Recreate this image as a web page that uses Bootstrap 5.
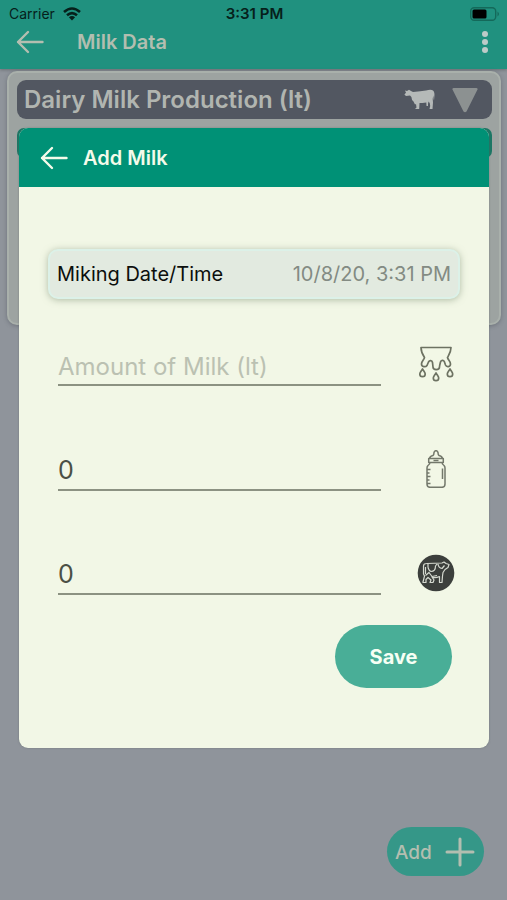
<!DOCTYPE html>
<html lang="en">
<head>
<meta charset="utf-8">
<meta name="viewport" content="width=device-width, initial-scale=1">
<title>Add Milk</title>
<link rel="stylesheet" href="https://cdn.jsdelivr.net/npm/bootstrap@5.3.0/dist/css/bootstrap.min.css">
<style>
  body { font-family: Inter, "Liberation Sans", sans-serif; background: #8f949b; color: #000; }
  svg { display: block; flex: none; }
  .app-page { min-height: 100vh; }
  .app-head { background: #20917f; height: 69px; box-shadow: 0 1px 3px rgba(0,0,0,.25); }
  .status-row { display: grid; grid-template-columns: 1fr auto 1fr; height: 28px; padding: 0 7px 0 9px; font-size: 14px; line-height: 28px; color: #06201b; }
  .status-time { font-size: 15px; line-height: 28px; font-weight: 600; }
  .title-row { height: 28px; padding: 0 18px 0 16px; color: #b3beb0; }
  .page-title { font-size: 20px; line-height: 28px; font-weight: 600; margin-left: 33px; }
  .plain-btn { border: 0; background: none; padding: 0; color: inherit; }
  .record-panel { margin: 2px 6px 0 7px; min-height: 254px; padding: 7px 7px 7px 8px; background: #9da3a1; border: 2px solid #a9b0ab; border-radius: 10px; box-shadow: 0 1px 4px rgba(60,65,75,.4); }
  .record-head { height: 39px; padding: 0 13px 0 7px; border-radius: 9px; background: #525761; color: #b1b5b0; }
  .record-title { font-size: 24px; line-height: 39px; font-weight: 600; }
  .record-strip { height: 30px; margin-top: 9px; background: #1c7765; border-radius: 7px; }
  .add-btn { width: 97px; height: 49px; padding: 0 9px 0 8px; border-radius: 25px; background: #359788; color: #b3beb0; font-size: 19px; font-weight: 500; margin: 0 23px 24px 0; }
  .sheet-layer { position: absolute; inset: 0; padding: 128px 18px 0 19px; }
  .milk-sheet { background: #f2f7e6; border-radius: 9px; overflow: hidden; padding-bottom: 60px; box-shadow: 0 0 2px rgba(90,100,100,.6); }
  .sheet-head { background: #009176; color: #f4fbea; height: 59px; padding: 0 21px; gap: 15px; }
  .sheet-title { font-size: 20px; line-height: 28px; font-weight: 600; }
  .date-row { margin: 62px 29px 0; height: 50px; padding: 0 7px; background: #e2eae0; border: 2px solid #dcf1e8; border-radius: 10px; box-shadow: 0 1px 7px rgba(110,130,100,.5); font-size: 20px; color: #0c0f0c; }
  .date-value { color: #838b83; }
  .field-row { height: 44px; margin: 0 34px 0 39px; }
  .field-row + .field-row { margin-top: 60px; }
  .date-row + .first-field { margin-top: 43px; }
  .first-field + .field-row { margin-top: 61px; }
  .field-line { height: 44px; min-width: 0; border: 0; border-bottom: 2px solid #8c9282; border-radius: 0; background: none; padding: 4px 0 0; font-size: 25px; line-height: 32px; color: #4b5045; outline: 0; }
  .field-line::placeholder { color: #bbc1b2; opacity: 1; }
  .short-text { font-size: 24px; padding-top: 6px; }
  .field-icon { flex: none; width: 38px; height: 44px; margin-left: 36px; }
  .save-btn { width: 117px; height: 63px; border-radius: 32px; background: #49ae97; color: #f6fff4; font-size: 20px; font-weight: 700; margin: 30px 37px 0 0; }
</style>
<script src="https://cdn.jsdelivr.net/npm/bootstrap@5.3.0/dist/js/bootstrap.bundle.min.js"></script>
</head>
<body>
<div class="app-page d-flex flex-column position-relative">
  <header class="app-head">
    <div class="status-row">
      <span class="d-flex align-items-center gap-2">Carrier
        <svg width="18" height="14" viewBox="0 0 18 14" fill="none" stroke="#06201b" stroke-width="2.6"><path d="M1 5Q9-2 17 5M4 8.300Q9 4 14 8.300"/><path d="M9 13.500 5.900 10.300Q9 7.900 12.100 10.300z" fill="#06201b" stroke="none"/></svg>
      </span>
      <span class="status-time">3:31 PM</span>
      <span class="d-flex align-items-center justify-content-end">
        <svg width="30" height="14" viewBox="0 0 30 14"><rect x=".7" y=".7" width="25" height="12.600" rx="3.500" fill="none" stroke="#14695a" stroke-width="1.400"/><rect x="2.500" y="2.500" width="14" height="9" rx="1.500" fill="#000"/><path d="M27.500 4.500q3 2.500 0 5z" fill="#14695a"/></svg>
      </span>
    </div>
    <div class="title-row d-flex align-items-center">
      <button class="plain-btn" type="button" aria-label="Back"><svg width="28" height="24" viewBox="0 0 28 24" fill="none" stroke="currentColor" stroke-width="2.400" stroke-linecap="round" stroke-linejoin="round"><path d="M26.500 12H2M12 2 2 12 12 22"/></svg></button>
      <h1 class="page-title mb-0">Milk Data</h1>
      <button class="plain-btn ms-auto" type="button" aria-label="More options"><svg width="8" height="24" viewBox="0 0 8 24" fill="#bdcbc8"><circle cx="4" cy="4" r="3"/><circle cx="4" cy="12" r="3"/><circle cx="4" cy="20" r="3"/></svg></button>
    </div>
  </header>

  <main class="record-panel">
    <div class="record-head d-flex align-items-center">
      <h2 class="record-title mb-0 text-nowrap">Dairy Milk Production (lt)</h2>
      <svg class="ms-auto" width="31" height="21" viewBox="0 0 31 21" fill="#b5b9b8"><path d="M1 1.500 3 2 5 .7 7 2 9 3Q17 2 22 1.500Q27 .2 29 1.500Q31 3 30.300 8L30 11.500Q29.500 10 29.300 6.500L28.700 10 29 13.500 28.500 20H25.500L26.200 17 25.700 14 24.500 12.500 24 15 24 17H22.500L22.300 13.500Q18 14 15.500 14L15.200 20H11L12.500 18.500 12 15 11 15.500 9.500 12.500Q7.500 11 7.400 8L6 6.500 2 7 .4 5.500 2 3.800z"/></svg>
      <svg class="ms-3" width="28" height="26" viewBox="0 0 28 26"><path d="M2.500 1h23q1.500 0 1 1.500L15.500 24.500q-1.500 1.500-3 0L1.500 2.500q-.5-1.500 1-1.500z" fill="#8c9191"/></svg>
    </div>
    <div class="record-strip"></div>
  </main>

  <button class="add-btn plain-btn d-flex align-items-center justify-content-between mt-auto align-self-end" type="button"><span class="pt-1">Add</span>
    <svg width="30" height="30" viewBox="0 0 30 30" stroke="currentColor" stroke-width="3" stroke-linecap="round"><path d="M15 2v26M2 15h26"/></svg>
  </button>

  <div class="sheet-layer">
    <form class="milk-sheet" role="dialog" aria-labelledby="sheet-title">
      <div class="sheet-head d-flex align-items-center">
        <button class="plain-btn" type="button" aria-label="Close"><svg width="28" height="24" viewBox="0 0 28 24" fill="none" stroke="currentColor" stroke-width="2.400" stroke-linecap="round" stroke-linejoin="round"><path d="M26.500 12H2M12 2 2 12 12 22"/></svg></button>
        <h2 class="sheet-title mb-0" id="sheet-title">Add Milk</h2>
      </div>

      <div class="date-row d-flex align-items-center justify-content-between text-nowrap">
        <span>Miking Date/Time</span>
        <button class="plain-btn date-value" type="button">10/8/20, 3:31 PM</button>
      </div>

      <div class="field-row first-field d-flex align-items-center">
        <input class="field-line short-text flex-grow-1" id="amount" type="text" placeholder="Amount of Milk (lt)">
        <label class="field-icon d-flex align-items-center justify-content-center" for="amount" aria-label="Amount of milk">
          <svg width="36" height="36" viewBox="0 0 36 36" fill="none" stroke="#6d7262" stroke-width="1.700" stroke-linejoin="round"><path d="M3 1.500H33C33 6 31.500 8 29.500 11.500C30 14 32.500 15 32.500 18C32.500 21 28.500 21.500 27.500 19L26.300 15.500C25.500 13.800 23 14 22.500 16C22 18 21.500 19.500 21.500 21C21.500 24.500 15 24.500 15 21L14.500 16.500C14 14 11.500 14 10.500 16L9 19.500C7.500 21.500 3.500 21 3.500 18C3.500 15 6.500 13.500 6.500 11.500C4.500 8.500 3 6 3 1.500z"/><path d="M4.500 23C3 25.500 1.800 26.500 1.800 28a2.700 2.700 0 0 0 5.400 0C7.200 26.500 6 25.500 4.500 23zM18 27C16.500 29.500 15.300 30.500 15.300 32a2.700 2.700 0 0 0 5.400 0C20.700 30.500 19.500 29.500 18 27zM32 23C30.500 25.500 29.300 26.500 29.300 28a2.700 2.700 0 0 0 5.400 0C34.700 26.500 33.500 25.500 32 23z"/></svg>
        </label>
      </div>

      <div class="field-row d-flex align-items-center">
        <input class="field-line flex-grow-1" id="bottle" type="text" inputmode="decimal" value="0">
        <label class="field-icon d-flex align-items-center justify-content-center" for="bottle" aria-label="Milk fed to calves">
          <svg width="20" height="38" viewBox="0 0 20 38" fill="none" stroke="#73786b" stroke-width="1.500" stroke-linejoin="round"><path d="M3.500 8.500Q4 6 7 5.500Q8 4.500 8 2.500Q8.500 .7 10 .7T12 2.500Q12 4.500 13 5.500Q16 6 16.500 8.500zM2.700 8.500H17.300V12.500H2.700zM4 12.500Q4 14 2 15.500Q1 16.500 1 18V34Q1 37.300 4 37.300H16Q19 37.300 19 34V18Q19 16.500 18 15.500Q16 14 16 12.500"/><path d="M1 19.500H4.500M1 23H3.500M1 26.500H4.500M1 30H3.500M1 33.500H4.500M16.500 18.500V29M7.500 10.500H12.500"/></svg>
        </label>
      </div>

      <div class="field-row d-flex align-items-center">
        <input class="field-line flex-grow-1" id="cow" type="text" inputmode="decimal" value="0">
        <label class="field-icon d-flex align-items-center justify-content-center" for="cow" aria-label="Cows">
          <svg width="38" height="38" viewBox="0 0 38 38" fill="none" stroke="#d5d9d0" stroke-width="1.200" stroke-linejoin="round"><circle cx="19" cy="19" r="18.300" fill="#3c3f3c" stroke="none"/><path d="M6 28 7.500 22 6.500 20V12Q6.500 9.500 9.500 9.500L25 9 27 8 29 9.500 32 10.500 31 13.500 28 15.500 26 18.500 25.500 22 25 28.500H22.500V22.500Q18 24.500 15 23L17 26 16 28.500H13L14 26 11 23.500 9 25.500V28.500H6zM8.500 20V13"/><path d="M11 10Q10.500 16 14 17.500Q18.500 17.500 18.500 12L20 10M21 10Q21.500 14 25 14.500L27.500 11.500M8.500 21.500 12 18.500 15 22.500 20 21.500"/></svg>
        </label>
      </div>

      <div class="d-flex justify-content-end">
        <button class="save-btn plain-btn" type="submit">Save</button>
      </div>
    </form>
  </div>
</div>
</body>
</html>
